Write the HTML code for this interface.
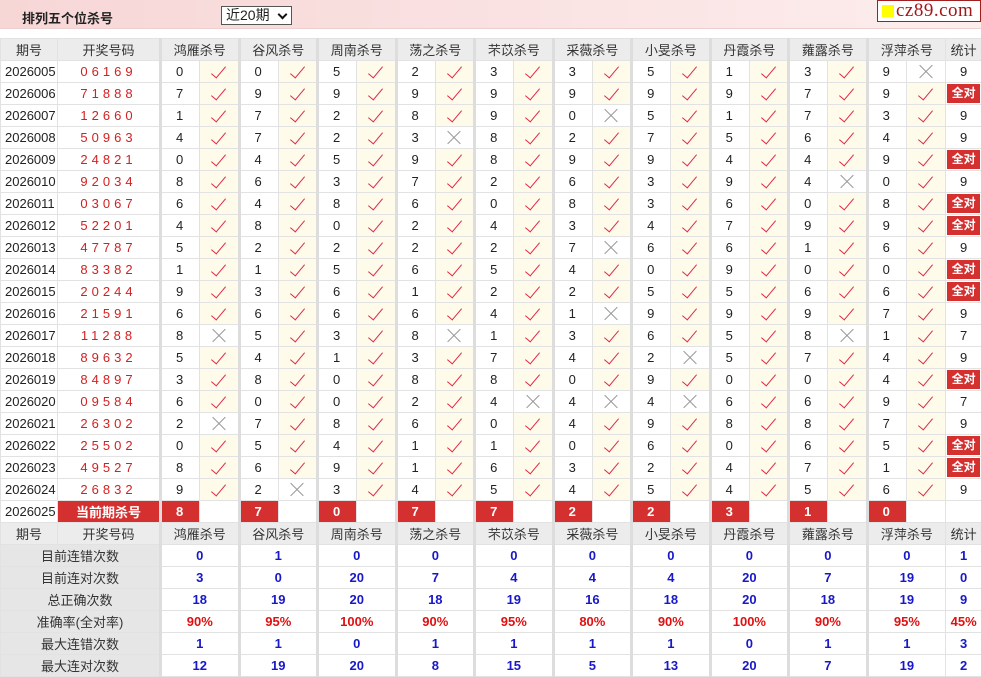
<!DOCTYPE html>
<html><head><meta charset="utf-8">
<style>
*{margin:0;padding:0;box-sizing:border-box}
body{width:981px;height:676px;overflow:hidden;background:#fff;font-family:"Liberation Sans","Noto Sans CJK SC",sans-serif;font-size:13px;color:#222;position:relative}
.bar{position:absolute;left:0;top:0;width:981px;height:29px;background:linear-gradient(90deg,#f7d6d6,#fbe6e6 70%,#fdeeee);border-bottom:1px solid #ecd0d0}
.bar .t{position:absolute;left:22px;top:8px;font-weight:bold;font-size:13px}
.sel{position:absolute;left:221px;top:6px;width:71px;height:19px;border:1px solid #555;background:#fff;font-size:14px;padding-left:4px;line-height:17px}
.sel i{position:absolute;right:5px;top:4px;width:7px;height:7px;border-right:2px solid #111;border-bottom:2px solid #111;transform:rotate(45deg)}
.logo{position:absolute;left:877px;top:0;width:104px;height:22px;background:#fff;border:1px solid #a02020;font-family:"Liberation Serif",serif;font-size:19px;color:#a01818;line-height:19px;padding-left:4px;letter-spacing:0.5px}
.logo b{display:inline-block;width:12px;height:12px;background:#ffff00;margin-right:2px;vertical-align:-1px}
table{position:absolute;left:0;top:38px;border-collapse:collapse;table-layout:fixed;width:981px}
td{height:22px;border:1px solid #e2e2e2;text-align:center;padding:0;white-space:nowrap;overflow:hidden}
tr.h td{background:#ececec;color:#333}
td.g{border-left:3px solid #ddd;text-align:left;padding-left:14px}
tr.h td.g,tr.s td.g{text-align:center;padding-left:0}
td.d{text-align:left;padding-left:4px}
td.n{color:#d42020;letter-spacing:4px;font-size:13px}
td.m{background:#fffbea;position:relative}
td.w{background:#fff;position:relative}
.v{display:inline-block;width:7px;height:15px;border-right:1.5px solid #e02848;border-bottom:1.5px solid #e02848;transform:rotate(40deg);margin-top:-5px;vertical-align:middle}
.x{display:inline-block;width:14px;height:14px;position:relative;vertical-align:middle}
.x:before,.x:after{content:"";position:absolute;left:-2px;top:6px;width:18px;height:1px;background:#999;transform:rotate(45deg)}
.x:after{transform:rotate(-45deg)}
td.all{padding:1px}
td.all span{display:block;background:#d53030;color:#fff;font-weight:bold;font-size:12px;line-height:19px}
td.cur{background:#d53030;color:#fff;font-weight:bold}
td.cn{background:#d53030;color:#fff;font-weight:bold;text-align:left;padding-left:14px;border-left:3px solid #ddd}
tr.s td{font-weight:bold;color:#1818c8}
tr.s td.l{background:#e6e6e6;color:#333;font-weight:normal}
tr.s td.r{color:#e01010}
</style></head><body>
<div class="bar"><span class="t">排列五个位杀号</span></div>
<div class="sel">近20期<i></i></div>
<div class="logo"><b></b>cz89.com</div>
<table>
<colgroup><col style="width:57px"><col style="width:103px">
<col style="width:39px"><col style="width:39.5px"><col style="width:39px"><col style="width:39.5px"><col style="width:39px"><col style="width:39.5px"><col style="width:39px"><col style="width:39.5px"><col style="width:39px"><col style="width:39.5px"><col style="width:39px"><col style="width:39.5px"><col style="width:39px"><col style="width:39.5px"><col style="width:39px"><col style="width:39.5px"><col style="width:39px"><col style="width:39.5px"><col style="width:39px"><col style="width:39.5px">
<col style="width:36px"></colgroup>
<tr class="h"><td>期号</td><td>开奖号码</td><td class="g" colspan="2">鸿雁杀号</td><td class="g" colspan="2">谷风杀号</td><td class="g" colspan="2">周南杀号</td><td class="g" colspan="2">荡之杀号</td><td class="g" colspan="2">芣苡杀号</td><td class="g" colspan="2">采薇杀号</td><td class="g" colspan="2">小旻杀号</td><td class="g" colspan="2">丹霞杀号</td><td class="g" colspan="2">蕹露杀号</td><td class="g" colspan="2">浮萍杀号</td><td>统计</td></tr>
<tr><td class="d">2026005</td><td class="n">06169</td><td class="g">0</td><td class="m"><i class="v"></i></td><td class="g">0</td><td class="m"><i class="v"></i></td><td class="g">5</td><td class="m"><i class="v"></i></td><td class="g">2</td><td class="m"><i class="v"></i></td><td class="g">3</td><td class="m"><i class="v"></i></td><td class="g">3</td><td class="m"><i class="v"></i></td><td class="g">5</td><td class="m"><i class="v"></i></td><td class="g">1</td><td class="m"><i class="v"></i></td><td class="g">3</td><td class="m"><i class="v"></i></td><td class="g">9</td><td class="w"><i class="x"></i></td><td>9</td></tr>
<tr><td class="d">2026006</td><td class="n">71888</td><td class="g">7</td><td class="m"><i class="v"></i></td><td class="g">9</td><td class="m"><i class="v"></i></td><td class="g">9</td><td class="m"><i class="v"></i></td><td class="g">9</td><td class="m"><i class="v"></i></td><td class="g">9</td><td class="m"><i class="v"></i></td><td class="g">9</td><td class="m"><i class="v"></i></td><td class="g">9</td><td class="m"><i class="v"></i></td><td class="g">9</td><td class="m"><i class="v"></i></td><td class="g">7</td><td class="m"><i class="v"></i></td><td class="g">9</td><td class="m"><i class="v"></i></td><td class="all"><span>全对</span></td></tr>
<tr><td class="d">2026007</td><td class="n">12660</td><td class="g">1</td><td class="m"><i class="v"></i></td><td class="g">7</td><td class="m"><i class="v"></i></td><td class="g">2</td><td class="m"><i class="v"></i></td><td class="g">8</td><td class="m"><i class="v"></i></td><td class="g">9</td><td class="m"><i class="v"></i></td><td class="g">0</td><td class="w"><i class="x"></i></td><td class="g">5</td><td class="m"><i class="v"></i></td><td class="g">1</td><td class="m"><i class="v"></i></td><td class="g">7</td><td class="m"><i class="v"></i></td><td class="g">3</td><td class="m"><i class="v"></i></td><td>9</td></tr>
<tr><td class="d">2026008</td><td class="n">50963</td><td class="g">4</td><td class="m"><i class="v"></i></td><td class="g">7</td><td class="m"><i class="v"></i></td><td class="g">2</td><td class="m"><i class="v"></i></td><td class="g">3</td><td class="w"><i class="x"></i></td><td class="g">8</td><td class="m"><i class="v"></i></td><td class="g">2</td><td class="m"><i class="v"></i></td><td class="g">7</td><td class="m"><i class="v"></i></td><td class="g">5</td><td class="m"><i class="v"></i></td><td class="g">6</td><td class="m"><i class="v"></i></td><td class="g">4</td><td class="m"><i class="v"></i></td><td>9</td></tr>
<tr><td class="d">2026009</td><td class="n">24821</td><td class="g">0</td><td class="m"><i class="v"></i></td><td class="g">4</td><td class="m"><i class="v"></i></td><td class="g">5</td><td class="m"><i class="v"></i></td><td class="g">9</td><td class="m"><i class="v"></i></td><td class="g">8</td><td class="m"><i class="v"></i></td><td class="g">9</td><td class="m"><i class="v"></i></td><td class="g">9</td><td class="m"><i class="v"></i></td><td class="g">4</td><td class="m"><i class="v"></i></td><td class="g">4</td><td class="m"><i class="v"></i></td><td class="g">9</td><td class="m"><i class="v"></i></td><td class="all"><span>全对</span></td></tr>
<tr><td class="d">2026010</td><td class="n">92034</td><td class="g">8</td><td class="m"><i class="v"></i></td><td class="g">6</td><td class="m"><i class="v"></i></td><td class="g">3</td><td class="m"><i class="v"></i></td><td class="g">7</td><td class="m"><i class="v"></i></td><td class="g">2</td><td class="m"><i class="v"></i></td><td class="g">6</td><td class="m"><i class="v"></i></td><td class="g">3</td><td class="m"><i class="v"></i></td><td class="g">9</td><td class="m"><i class="v"></i></td><td class="g">4</td><td class="w"><i class="x"></i></td><td class="g">0</td><td class="m"><i class="v"></i></td><td>9</td></tr>
<tr><td class="d">2026011</td><td class="n">03067</td><td class="g">6</td><td class="m"><i class="v"></i></td><td class="g">4</td><td class="m"><i class="v"></i></td><td class="g">8</td><td class="m"><i class="v"></i></td><td class="g">6</td><td class="m"><i class="v"></i></td><td class="g">0</td><td class="m"><i class="v"></i></td><td class="g">8</td><td class="m"><i class="v"></i></td><td class="g">3</td><td class="m"><i class="v"></i></td><td class="g">6</td><td class="m"><i class="v"></i></td><td class="g">0</td><td class="m"><i class="v"></i></td><td class="g">8</td><td class="m"><i class="v"></i></td><td class="all"><span>全对</span></td></tr>
<tr><td class="d">2026012</td><td class="n">52201</td><td class="g">4</td><td class="m"><i class="v"></i></td><td class="g">8</td><td class="m"><i class="v"></i></td><td class="g">0</td><td class="m"><i class="v"></i></td><td class="g">2</td><td class="m"><i class="v"></i></td><td class="g">4</td><td class="m"><i class="v"></i></td><td class="g">3</td><td class="m"><i class="v"></i></td><td class="g">4</td><td class="m"><i class="v"></i></td><td class="g">7</td><td class="m"><i class="v"></i></td><td class="g">9</td><td class="m"><i class="v"></i></td><td class="g">9</td><td class="m"><i class="v"></i></td><td class="all"><span>全对</span></td></tr>
<tr><td class="d">2026013</td><td class="n">47787</td><td class="g">5</td><td class="m"><i class="v"></i></td><td class="g">2</td><td class="m"><i class="v"></i></td><td class="g">2</td><td class="m"><i class="v"></i></td><td class="g">2</td><td class="m"><i class="v"></i></td><td class="g">2</td><td class="m"><i class="v"></i></td><td class="g">7</td><td class="w"><i class="x"></i></td><td class="g">6</td><td class="m"><i class="v"></i></td><td class="g">6</td><td class="m"><i class="v"></i></td><td class="g">1</td><td class="m"><i class="v"></i></td><td class="g">6</td><td class="m"><i class="v"></i></td><td>9</td></tr>
<tr><td class="d">2026014</td><td class="n">83382</td><td class="g">1</td><td class="m"><i class="v"></i></td><td class="g">1</td><td class="m"><i class="v"></i></td><td class="g">5</td><td class="m"><i class="v"></i></td><td class="g">6</td><td class="m"><i class="v"></i></td><td class="g">5</td><td class="m"><i class="v"></i></td><td class="g">4</td><td class="m"><i class="v"></i></td><td class="g">0</td><td class="m"><i class="v"></i></td><td class="g">9</td><td class="m"><i class="v"></i></td><td class="g">0</td><td class="m"><i class="v"></i></td><td class="g">0</td><td class="m"><i class="v"></i></td><td class="all"><span>全对</span></td></tr>
<tr><td class="d">2026015</td><td class="n">20244</td><td class="g">9</td><td class="m"><i class="v"></i></td><td class="g">3</td><td class="m"><i class="v"></i></td><td class="g">6</td><td class="m"><i class="v"></i></td><td class="g">1</td><td class="m"><i class="v"></i></td><td class="g">2</td><td class="m"><i class="v"></i></td><td class="g">2</td><td class="m"><i class="v"></i></td><td class="g">5</td><td class="m"><i class="v"></i></td><td class="g">5</td><td class="m"><i class="v"></i></td><td class="g">6</td><td class="m"><i class="v"></i></td><td class="g">6</td><td class="m"><i class="v"></i></td><td class="all"><span>全对</span></td></tr>
<tr><td class="d">2026016</td><td class="n">21591</td><td class="g">6</td><td class="m"><i class="v"></i></td><td class="g">6</td><td class="m"><i class="v"></i></td><td class="g">6</td><td class="m"><i class="v"></i></td><td class="g">6</td><td class="m"><i class="v"></i></td><td class="g">4</td><td class="m"><i class="v"></i></td><td class="g">1</td><td class="w"><i class="x"></i></td><td class="g">9</td><td class="m"><i class="v"></i></td><td class="g">9</td><td class="m"><i class="v"></i></td><td class="g">9</td><td class="m"><i class="v"></i></td><td class="g">7</td><td class="m"><i class="v"></i></td><td>9</td></tr>
<tr><td class="d">2026017</td><td class="n">11288</td><td class="g">8</td><td class="w"><i class="x"></i></td><td class="g">5</td><td class="m"><i class="v"></i></td><td class="g">3</td><td class="m"><i class="v"></i></td><td class="g">8</td><td class="w"><i class="x"></i></td><td class="g">1</td><td class="m"><i class="v"></i></td><td class="g">3</td><td class="m"><i class="v"></i></td><td class="g">6</td><td class="m"><i class="v"></i></td><td class="g">5</td><td class="m"><i class="v"></i></td><td class="g">8</td><td class="w"><i class="x"></i></td><td class="g">1</td><td class="m"><i class="v"></i></td><td>7</td></tr>
<tr><td class="d">2026018</td><td class="n">89632</td><td class="g">5</td><td class="m"><i class="v"></i></td><td class="g">4</td><td class="m"><i class="v"></i></td><td class="g">1</td><td class="m"><i class="v"></i></td><td class="g">3</td><td class="m"><i class="v"></i></td><td class="g">7</td><td class="m"><i class="v"></i></td><td class="g">4</td><td class="m"><i class="v"></i></td><td class="g">2</td><td class="w"><i class="x"></i></td><td class="g">5</td><td class="m"><i class="v"></i></td><td class="g">7</td><td class="m"><i class="v"></i></td><td class="g">4</td><td class="m"><i class="v"></i></td><td>9</td></tr>
<tr><td class="d">2026019</td><td class="n">84897</td><td class="g">3</td><td class="m"><i class="v"></i></td><td class="g">8</td><td class="m"><i class="v"></i></td><td class="g">0</td><td class="m"><i class="v"></i></td><td class="g">8</td><td class="m"><i class="v"></i></td><td class="g">8</td><td class="m"><i class="v"></i></td><td class="g">0</td><td class="m"><i class="v"></i></td><td class="g">9</td><td class="m"><i class="v"></i></td><td class="g">0</td><td class="m"><i class="v"></i></td><td class="g">0</td><td class="m"><i class="v"></i></td><td class="g">4</td><td class="m"><i class="v"></i></td><td class="all"><span>全对</span></td></tr>
<tr><td class="d">2026020</td><td class="n">09584</td><td class="g">6</td><td class="m"><i class="v"></i></td><td class="g">0</td><td class="m"><i class="v"></i></td><td class="g">0</td><td class="m"><i class="v"></i></td><td class="g">2</td><td class="m"><i class="v"></i></td><td class="g">4</td><td class="w"><i class="x"></i></td><td class="g">4</td><td class="w"><i class="x"></i></td><td class="g">4</td><td class="w"><i class="x"></i></td><td class="g">6</td><td class="m"><i class="v"></i></td><td class="g">6</td><td class="m"><i class="v"></i></td><td class="g">9</td><td class="m"><i class="v"></i></td><td>7</td></tr>
<tr><td class="d">2026021</td><td class="n">26302</td><td class="g">2</td><td class="w"><i class="x"></i></td><td class="g">7</td><td class="m"><i class="v"></i></td><td class="g">8</td><td class="m"><i class="v"></i></td><td class="g">6</td><td class="m"><i class="v"></i></td><td class="g">0</td><td class="m"><i class="v"></i></td><td class="g">4</td><td class="m"><i class="v"></i></td><td class="g">9</td><td class="m"><i class="v"></i></td><td class="g">8</td><td class="m"><i class="v"></i></td><td class="g">8</td><td class="m"><i class="v"></i></td><td class="g">7</td><td class="m"><i class="v"></i></td><td>9</td></tr>
<tr><td class="d">2026022</td><td class="n">25502</td><td class="g">0</td><td class="m"><i class="v"></i></td><td class="g">5</td><td class="m"><i class="v"></i></td><td class="g">4</td><td class="m"><i class="v"></i></td><td class="g">1</td><td class="m"><i class="v"></i></td><td class="g">1</td><td class="m"><i class="v"></i></td><td class="g">0</td><td class="m"><i class="v"></i></td><td class="g">6</td><td class="m"><i class="v"></i></td><td class="g">0</td><td class="m"><i class="v"></i></td><td class="g">6</td><td class="m"><i class="v"></i></td><td class="g">5</td><td class="m"><i class="v"></i></td><td class="all"><span>全对</span></td></tr>
<tr><td class="d">2026023</td><td class="n">49527</td><td class="g">8</td><td class="m"><i class="v"></i></td><td class="g">6</td><td class="m"><i class="v"></i></td><td class="g">9</td><td class="m"><i class="v"></i></td><td class="g">1</td><td class="m"><i class="v"></i></td><td class="g">6</td><td class="m"><i class="v"></i></td><td class="g">3</td><td class="m"><i class="v"></i></td><td class="g">2</td><td class="m"><i class="v"></i></td><td class="g">4</td><td class="m"><i class="v"></i></td><td class="g">7</td><td class="m"><i class="v"></i></td><td class="g">1</td><td class="m"><i class="v"></i></td><td class="all"><span>全对</span></td></tr>
<tr><td class="d">2026024</td><td class="n">26832</td><td class="g">9</td><td class="m"><i class="v"></i></td><td class="g">2</td><td class="w"><i class="x"></i></td><td class="g">3</td><td class="m"><i class="v"></i></td><td class="g">4</td><td class="m"><i class="v"></i></td><td class="g">5</td><td class="m"><i class="v"></i></td><td class="g">4</td><td class="m"><i class="v"></i></td><td class="g">5</td><td class="m"><i class="v"></i></td><td class="g">4</td><td class="m"><i class="v"></i></td><td class="g">5</td><td class="m"><i class="v"></i></td><td class="g">6</td><td class="m"><i class="v"></i></td><td>9</td></tr>
<tr><td class="d">2026025</td><td class="cur">当前期杀号</td><td class="cn">8</td><td></td><td class="cn">7</td><td></td><td class="cn">0</td><td></td><td class="cn">7</td><td></td><td class="cn">7</td><td></td><td class="cn">2</td><td></td><td class="cn">2</td><td></td><td class="cn">3</td><td></td><td class="cn">1</td><td></td><td class="cn">0</td><td></td><td></td></tr>
<tr class="h"><td>期号</td><td>开奖号码</td><td class="g" colspan="2">鸿雁杀号</td><td class="g" colspan="2">谷风杀号</td><td class="g" colspan="2">周南杀号</td><td class="g" colspan="2">荡之杀号</td><td class="g" colspan="2">芣苡杀号</td><td class="g" colspan="2">采薇杀号</td><td class="g" colspan="2">小旻杀号</td><td class="g" colspan="2">丹霞杀号</td><td class="g" colspan="2">蕹露杀号</td><td class="g" colspan="2">浮萍杀号</td><td>统计</td></tr>
<tr class="s"><td class="l" colspan="2">目前连错次数</td><td class="g" colspan="2">0</td><td class="g" colspan="2">1</td><td class="g" colspan="2">0</td><td class="g" colspan="2">0</td><td class="g" colspan="2">0</td><td class="g" colspan="2">0</td><td class="g" colspan="2">0</td><td class="g" colspan="2">0</td><td class="g" colspan="2">0</td><td class="g" colspan="2">0</td><td>1</td></tr>
<tr class="s"><td class="l" colspan="2">目前连对次数</td><td class="g" colspan="2">3</td><td class="g" colspan="2">0</td><td class="g" colspan="2">20</td><td class="g" colspan="2">7</td><td class="g" colspan="2">4</td><td class="g" colspan="2">4</td><td class="g" colspan="2">4</td><td class="g" colspan="2">20</td><td class="g" colspan="2">7</td><td class="g" colspan="2">19</td><td>0</td></tr>
<tr class="s"><td class="l" colspan="2">总正确次数</td><td class="g" colspan="2">18</td><td class="g" colspan="2">19</td><td class="g" colspan="2">20</td><td class="g" colspan="2">18</td><td class="g" colspan="2">19</td><td class="g" colspan="2">16</td><td class="g" colspan="2">18</td><td class="g" colspan="2">20</td><td class="g" colspan="2">18</td><td class="g" colspan="2">19</td><td>9</td></tr>
<tr class="s"><td class="l" colspan="2">准确率(全对率)</td><td class="g r" colspan="2">90%</td><td class="g r" colspan="2">95%</td><td class="g r" colspan="2">100%</td><td class="g r" colspan="2">90%</td><td class="g r" colspan="2">95%</td><td class="g r" colspan="2">80%</td><td class="g r" colspan="2">90%</td><td class="g r" colspan="2">100%</td><td class="g r" colspan="2">90%</td><td class="g r" colspan="2">95%</td><td class="r">45%</td></tr>
<tr class="s"><td class="l" colspan="2">最大连错次数</td><td class="g" colspan="2">1</td><td class="g" colspan="2">1</td><td class="g" colspan="2">0</td><td class="g" colspan="2">1</td><td class="g" colspan="2">1</td><td class="g" colspan="2">1</td><td class="g" colspan="2">1</td><td class="g" colspan="2">0</td><td class="g" colspan="2">1</td><td class="g" colspan="2">1</td><td>3</td></tr>
<tr class="s"><td class="l" colspan="2">最大连对次数</td><td class="g" colspan="2">12</td><td class="g" colspan="2">19</td><td class="g" colspan="2">20</td><td class="g" colspan="2">8</td><td class="g" colspan="2">15</td><td class="g" colspan="2">5</td><td class="g" colspan="2">13</td><td class="g" colspan="2">20</td><td class="g" colspan="2">7</td><td class="g" colspan="2">19</td><td>2</td></tr>
</table>
</body></html>
